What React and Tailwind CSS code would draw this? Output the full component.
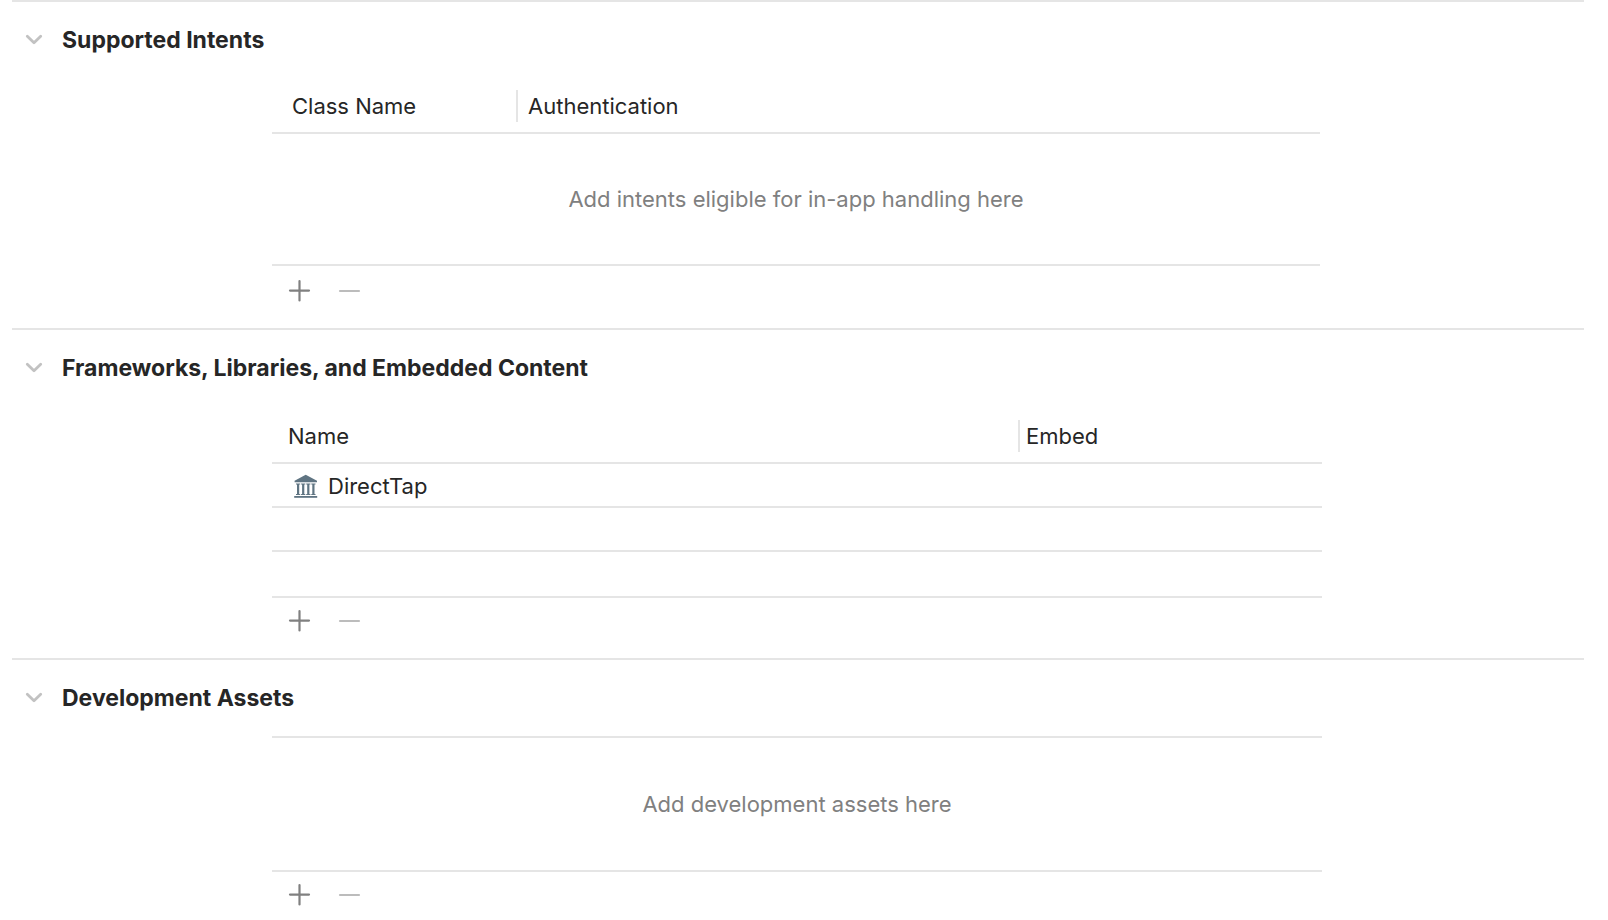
import React, { useState } from "react";

function Chevron({ open }) {
  return (
    <svg
      width="20"
      height="20"
      viewBox="0 0 20 20"
      fill="none"
      stroke="#c2c2c2"
      strokeWidth="2.8"
      strokeLinecap="round"
      strokeLinejoin="round"
      aria-hidden="true"
      className={open ? "" : "-rotate-90"}
    >
      <path d="M3.3 6.3 L10 12.8 L16.7 6.3" />
    </svg>
  );
}

function LibraryIcon() {
  return (
    <svg width="24" height="24" viewBox="0 0 24 24" fill="#5f7482" aria-hidden="true" className="shrink-0">
      <path d="M11.7 0.8 L23 6.8 V8.2 H0.6 V6.8 Z" />
      <path d="M2 9.4 h4.2 v1 h-1 v9.6 h1 v1 h-4.2 v-1 h1 v-9.6 h-1 Z" />
      <path d="M7.1 9.4 h4.2 v1 h-1 v9.6 h1 v1 h-4.2 v-1 h1 v-9.6 h-1 Z" />
      <path d="M12.2 9.4 h4.2 v1 h-1 v9.6 h1 v1 h-4.2 v-1 h1 v-9.6 h-1 Z" />
      <path d="M17.3 9.4 h4.2 v1 h-1 v9.6 h1 v1 h-4.2 v-1 h1 v-9.6 h-1 Z" />
      <path d="M0.2 22 H23.2 V23.8 H0.2 Z" />
    </svg>
  );
}

function Section({ title, children }) {
  const [open, setOpen] = useState(true);
  return (
    <section className="border-t-2 border-[#e5e5e5]">
      <h2 className="flex h-[76px] items-center text-[23px] leading-7 font-bold">
        <button
          type="button"
          aria-expanded={open}
          onClick={() => setOpen(!open)}
          className="flex items-center gap-[18px] pl-3"
        >
          <Chevron open={open} />
          <span>{title}</span>
        </button>
      </h2>
      {open && <div className="mr-[262px] ml-[260px]">{children}</div>}
    </section>
  );
}

function Toolbar({ label }) {
  return (
    <div className="flex h-[60px] gap-6 pt-2.5 pl-3.5">
      <button type="button" aria-label={"Add " + label} className="h-[26px] w-[26px]">
        <svg width="26" height="26" viewBox="0 0 26 26" stroke="#808080" strokeWidth="2.2" strokeLinecap="round" aria-hidden="true">
          <path d="M4 12.6 H23" />
          <path d="M13.5 3 V22.4" />
        </svg>
      </button>
      <button type="button" disabled aria-label={"Remove " + label} className="h-[26px] w-[26px]">
        <svg width="26" height="26" viewBox="0 0 26 26" stroke="#bcbcbc" strokeWidth="2.2" strokeLinecap="round" aria-hidden="true">
          <path d="M4 13 H23" />
        </svg>
      </button>
    </div>
  );
}

const cell = "border-b-2 border-[#e5e5e5] p-0 text-left font-normal";

export default function App() {
  return (
    <main className="mr-6 ml-3 min-h-screen bg-white font-['Inter','Liberation_Sans',sans-serif] text-[22px] leading-7 text-[#262626] antialiased">
      <Section title="Supported Intents">
        <div className="pr-0.5">
          <table className="w-full table-fixed border-separate border-spacing-0">
            <thead>
              <tr>
                <th scope="col" className={cell + " w-[244px] pt-3 pb-2.5 pl-5"}>Class Name</th>
                <th scope="col" className={cell + " pt-3 pb-2.5"}>
                  <div className="flex h-8 items-center border-l-2 border-[#e5e5e5] pl-2.5">Authentication</div>
                </th>
              </tr>
            </thead>
            <tbody>
              <tr>
                <td colSpan={2} className="h-[132px] border-b-2 border-[#e5e5e5] p-0 text-center text-[#808080]">
                  Add intents eligible for in-app handling here
                </td>
              </tr>
            </tbody>
          </table>
        </div>
        <div className="pt-0.5">
          <Toolbar label="intent" />
        </div>
      </Section>

      <Section title="Frameworks, Libraries, and Embedded Content">
        <table className="w-full table-fixed border-separate border-spacing-0">
          <thead>
            <tr>
              <th scope="col" className={cell + " pt-3.5 pb-2.5 pl-4"}>Name</th>
              <th scope="col" className={cell + " w-[304px] pt-3.5 pb-2.5"}>
                <div className="flex h-8 items-center border-l-2 border-[#e5e5e5] pl-1.5">Embed</div>
              </th>
            </tr>
          </thead>
          <tbody>
            <tr>
              <td className={cell + " h-11"}>
                <div className="flex items-center gap-2.5 pt-0.5 pl-[22px]">
                  <LibraryIcon />
                  <span>DirectTap</span>
                </div>
              </td>
              <td className={cell}></td>
            </tr>
            <tr>
              <td className={cell + " h-11"}></td>
              <td className={cell}></td>
            </tr>
            <tr>
              <td className={cell + " h-[46px]"}></td>
              <td className={cell}></td>
            </tr>
          </tbody>
        </table>
        <Toolbar label="framework" />
      </Section>

      <Section title="Development Assets">
        <div className="flex h-[136px] items-center justify-center border-y-2 border-[#e5e5e5] text-[#808080]">
          Add development assets here
        </div>
        <Toolbar label="development asset" />
      </Section>
    </main>
  );
}
